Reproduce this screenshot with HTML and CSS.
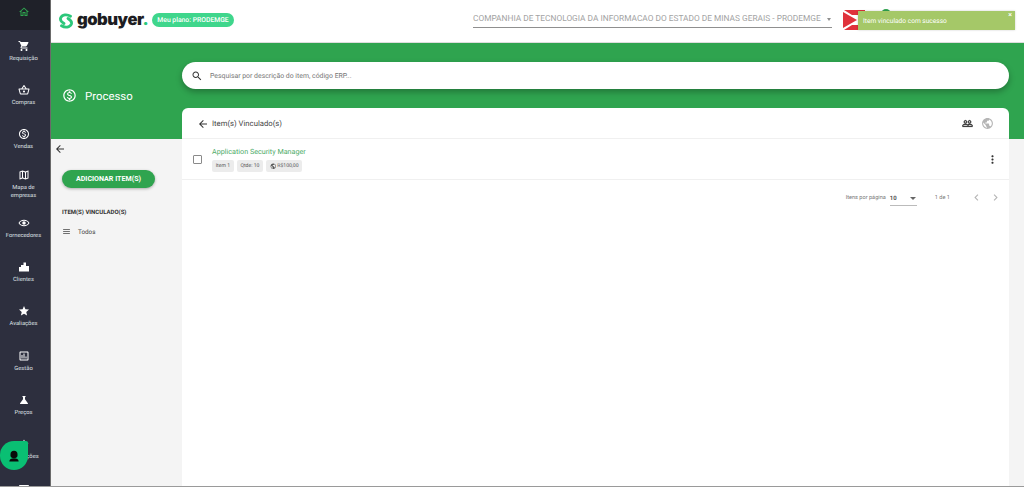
FILE: index.html
```html
<!DOCTYPE html>
<html lang="pt-BR">
<head>
<meta charset="utf-8">
<title>gobuyer</title>
<link rel="stylesheet" href="styles.css">
</head>
<body>
<div class="app">
  <aside class="sidebar">
    <a class="home"><svg class="home-icon" viewBox="0 0 24 24"><path d="M12 5.69l5 4.5V18h-2v-6H9v6H7v-7.81l5-4.5M12 3L2 12h3v8h6v-6h2v6h6v-8h3L12 3z"/></svg></a>
    <nav class="nav">
      <a class="nav-item"><svg viewBox="0 0 24 24"><path d="M7 18c-1.1 0-1.99.9-1.99 2S5.9 22 7 22s2-.9 2-2-.9-2-2-2zM1 2v2h2l3.6 7.59-1.35 2.45c-.16.28-.25.61-.25.96 0 1.1.9 2 2 2h12v-2H7.42c-.14 0-.25-.11-.25-.25l.03-.12.9-1.63h7.45c.75 0 1.41-.41 1.75-1.03l3.58-6.49c.08-.14.12-.31.12-.48 0-.55-.45-1-1-1H5.21l-.94-2H1zm16 16c-1.1 0-1.99.9-1.99 2s.89 2 1.99 2 2-.9 2-2-.9-2-2-2z"/></svg><span>Requisição</span></a>
      <a class="nav-item"><svg viewBox="0 0 24 24"><path d="M22 9h-4.79l-4.38-6.56c-.19-.28-.51-.42-.83-.42s-.64.14-.83.43L6.79 9H2c-.55 0-1 .45-1 1 0 .09.01.18.04.27l2.54 9.27c.23.84 1 1.46 1.92 1.46h13c.92 0 1.69-.62 1.93-1.46l2.54-9.27L23 10c0-.55-.45-1-1-1zM12 4.8L14.8 9H9.2L12 4.8zM18.5 19l-12.99.01L3.31 11H20.7l-2.2 8zM12 13c-1.1 0-2 .9-2 2s.9 2 2 2 2-.9 2-2-.9-2-2-2z"/></svg><span>Compras</span></a>
      <a class="nav-item"><svg viewBox="0 0 24 24"><path d="M12 2C6.48 2 2 6.48 2 12s4.48 10 10 10 10-4.48 10-10S17.52 2 12 2zm0 18c-4.41 0-8-3.59-8-8s3.59-8 8-8 8 3.59 8 8-3.59 8-8 8zm.31-8.86c-1.77-.45-2.34-.94-2.34-1.67 0-.84.79-1.43 2.1-1.43 1.38 0 1.9.66 1.94 1.64h1.71c-.05-1.34-.87-2.57-2.49-2.97V5H10.9v1.69c-1.51.32-2.72 1.3-2.72 2.81 0 1.79 1.49 2.69 3.66 3.21 1.95.46 2.34 1.15 2.34 1.87 0 .53-.39 1.39-2.1 1.39-1.6 0-2.23-.72-2.32-1.64H8.04c.1 1.7 1.36 2.66 2.86 2.97V19h2.34v-1.67c1.52-.29 2.72-1.16 2.73-2.77-.01-2.2-1.9-2.96-3.66-3.42z"/></svg><span>Vendas</span></a>
      <a class="nav-item"><svg viewBox="0 0 24 24"><path d="M20.5 3l-.16.03L15 5.1 9 3 3.36 4.9c-.21.07-.36.25-.36.48V20.5c0 .28.22.5.5.5l.16-.03L9 18.9l6 2.1 5.64-1.9c.21-.07.36-.25.36-.48V3.5c0-.28-.22-.5-.5-.5zM10 5.47l4 1.4v11.66l-4-1.4V5.47zm-5 .99l3-1.01v11.7l-3 1.16V6.46zm14 11.08l-3 1.01V6.86l3-1.16v11.84z"/></svg><span>Mapa de<br>empresas</span></a>
      <a class="nav-item"><svg viewBox="0 0 24 24"><path d="M12 5.5C7 5.500 2.730 8.100 1 12c1.730 3.900 6 6.500 11 6.500s9.270-2.600 11-6.500C21.270 8.100 17 5.500 12 5.500zm0 11c-4 0-7.300-1.800-8.800-4.500C4.700 9.300 8 7.500 12 7.500s7.300 1.800 8.800 4.500c-1.500 2.700-4.800 4.500-8.800 4.500zM12 8.500a3.500 3.500 0 1 0 0 7 3.500 3.500 0 0 0 0-7z"/></svg><span>Fornecedores</span></a>
      <a class="nav-item"><svg viewBox="0 0 24 24"><path d="M11 3h5v7h6v11H2V12h4V8h5z"/></svg><span>Clientes</span></a>
      <a class="nav-item"><svg viewBox="0 0 24 24"><path d="M12 17.27L18.18 21l-1.64-7.03L22 9.24l-7.19-.61L12 2 9.19 8.63 2 9.24l5.46 4.73L5.82 21z"/></svg><span>Avaliações</span></a>
      <a class="nav-item"><svg viewBox="0 0 24 24"><path d="M19 3H5c-1.100 0-2 .9-2 2v14c0 1.100.9 2 2 2h14c1.100 0 2-.9 2-2V5c0-1.100-.9-2-2-2zm0 16H5V5h14v14zM7 10h2v7H7zm4-3h2v10h-2zm4 6h2v4h-2z"/></svg><span>Gestão</span></a>
      <a class="nav-item"><svg viewBox="0 0 24 24"><path d="M19.800 18.400L14 10.670V6.500l1.350-1.690c.26-.33.03-.81-.39-.81H9.040c-.42 0-.65.48-.39.81L10 6.500v4.170L4.200 18.400c-.49.66-.02 1.600.8 1.600h14c.82 0 1.290-.94.8-1.600z"/></svg><span>Preços</span></a>
      <a class="nav-item"><svg viewBox="0 0 24 24"><path d="M12 3l3 6 6 1-4.500 4 1 6-5.500-3-5.500 3 1-6L3 10l6-1z"/></svg><span>Integrações</span></a>
      <a class="nav-item nav-item-cut"><svg viewBox="0 0 24 24"><path d="M4 4h16c1.100 0 2 .9 2 2v12c0 1.100-.9 2-2 2H4c-1.100 0-2-.9-2-2V6c0-1.100.9-2 2-2zm1 3v4h6V7zm8 0v4h6V7zM5 13v4h6v-4zm8 0v4h6v-4z"/></svg></a>
    </nav>
  </aside>

  <main class="main">
    <header class="topbar">
      <div class="brand">
        <svg class="brand-mark" viewBox="0 0 16 16"><path d="M12.500 3.200C9 1 4 1.500 2.600 5 1.800 7.500 3.500 9 6 10.500M3.500 12.800C7 15 12 14.500 13.400 11c.8-2.500-.9-4-3.400-5.500"/></svg>
        <span class="brand-name">gobuyer<span class="brand-dot">.</span></span>
      </div>
      <span class="plan">Meu plano: PRODEMGE</span>
      <div class="company">
        <span class="company-name">COMPANHIA DE TECNOLOGIA DA INFORMACAO DO ESTADO DE MINAS GERAIS - PRODEMGE</span>
        <i class="caret"></i>
      </div>
      <div class="company-logo"><svg viewBox="0 0 22 20"><path d="M0 2l14 8L0 18z" fill="#e0323c"/><path d="M1 0h21v5H9zM1 20h21v-5H9z" fill="#e0323c"/></svg></div>
      <span class="avatar-dot"></span>
    </header>

    <section class="banner">
      <div class="banner-title">
        <svg viewBox="0 0 24 24"><path d="M12 2C6.48 2 2 6.48 2 12s4.48 10 10 10 10-4.48 10-10S17.52 2 12 2zm0 18c-4.41 0-8-3.59-8-8s3.59-8 8-8 8 3.59 8 8-3.59 8-8 8zm.31-8.860c-1.770-.45-2.340-.94-2.340-1.670 0-.84.79-1.430 2.100-1.430 1.380 0 1.900.66 1.940 1.640h1.710c-.05-1.340-.87-2.570-2.490-2.970V5H10.900v1.690c-1.510.32-2.720 1.300-2.720 2.810 0 1.790 1.490 2.690 3.660 3.210 1.950.46 2.340 1.150 2.340 1.870 0 .53-.39 1.390-2.100 1.390-1.600 0-2.230-.72-2.320-1.640H8.040c.1 1.700 1.360 2.660 2.860 2.970V19h2.340v-1.670c1.520-.29 2.720-1.160 2.730-2.770-.01-2.200-1.900-2.960-3.660-3.420z"/></svg>
        <span>Processo</span>
      </div>
      <div class="search">
        <svg viewBox="0 0 24 24"><path d="M15.500 14h-.79l-.28-.27C15.410 12.590 16 11.110 16 9.500 16 5.910 13.090 3 9.500 3S3 5.910 3 9.500 5.910 16 9.500 16c1.610 0 3.090-.59 4.230-1.570l.27.28v.79l5 4.990L20.490 19l-4.990-5zm-6 0C7.010 14 5 11.990 5 9.500S7.010 5 9.500 5 14 7.010 14 9.500 11.990 14 9.500 14z"/></svg>
        <span>Pesquisar por descrição do item, código ERP...</span>
      </div>
    </section>

    <div class="content">
      <aside class="panel">
        <svg class="panel-back" viewBox="0 0 24 24"><path d="M20 11H7.830l5.590-5.590L12 4l-8 8 8 8 1.410-1.410L7.830 13H20v-2z"/></svg>
        <button class="add-btn">ADICIONAR ITEM(S)</button>
        <h4 class="panel-heading">ITEM(S) VINCULADO(S)</h4>
        <div class="panel-link">
          <svg viewBox="0 0 24 24"><path d="M3 18h18v-2H3v2zm0-5h18v-2H3v2zm0-7v2h18V6H3z"/></svg>
          <span>Todos</span>
        </div>
      </aside>

      <section class="card">
        <div class="card-head">
          <svg class="head-back" viewBox="0 0 24 24"><path d="M20 11H7.830l5.590-5.590L12 4l-8 8 8 8 1.410-1.410L7.830 13H20v-2z"/></svg>
          <span class="head-title">Item(s) Vinculado(s)</span>
          <svg class="head-people" viewBox="0 0 24 24"><path d="M16.500 13c-1.200 0-3.070.34-4.500 1-1.430-.67-3.300-1-4.500-1C5.330 13 1 14.080 1 16.250V19h22v-2.750c0-2.170-4.330-3.250-6.500-3.250zm-4 4.500h-10v-1.250c0-.54 2.560-1.750 5-1.750s5 1.210 5 1.750v1.250zm9 0H14v-1.250c0-.46-.2-.86-.52-1.220.88-.3 1.960-.53 3.020-.53 2.440 0 5 1.210 5 1.750v1.250zM7.500 12c1.930 0 3.500-1.570 3.500-3.500S9.430 5 7.500 5 4 6.570 4 8.500 5.570 12 7.500 12zm0-5.500c1.100 0 2 .9 2 2s-.9 2-2 2-2-.9-2-2 .9-2 2-2zm9 5.500c1.930 0 3.500-1.570 3.500-3.500S18.430 5 16.500 5 13 6.570 13 8.500s1.570 3.500 3.500 3.500zm0-5.500c1.100 0 2 .9 2 2s-.9 2-2 2-2-.9-2-2 .9-2 2-2z"/></svg>
          <svg class="head-globe" viewBox="0 0 24 24"><path d="M12 2C6.480 2 2 6.480 2 12s4.480 10 10 10 10-4.480 10-10S17.520 2 12 2zm-1 17.930c-3.950-.49-7-3.850-7-7.930 0-.62.08-1.210.21-1.790L9 15v1c0 1.100.9 2 2 2v1.930zm6.900-2.540c-.26-.81-1-1.390-1.900-1.390h-1v-3c0-.55-.45-1-1-1H8v-2h2c.55 0 1-.45 1-1V7h2c1.100 0 2-.9 2-2v-.41c2.930 1.190 5 4.060 5 7.410 0 2.080-.8 3.970-2.100 5.390z"/></svg>
        </div>
        <div class="row">
          <span class="checkbox"></span>
          <div class="row-body">
            <a class="row-title">Application Security Manager</a>
            <div class="chips">
              <span class="chip">Item 1</span>
              <span class="chip">Qtde: 10</span>
              <span class="chip"><svg viewBox="0 0 24 24"><path d="M12 2C6.480 2 2 6.480 2 12s4.480 10 10 10 10-4.480 10-10S17.520 2 12 2zm-1 17.930c-3.950-.49-7-3.850-7-7.930 0-.62.08-1.210.21-1.790L9 15v1c0 1.100.9 2 2 2v1.930zm6.900-2.540c-.26-.81-1-1.390-1.900-1.390h-1v-3c0-.55-.45-1-1-1H8v-2h2c.55 0 1-.45 1-1V7h2c1.100 0 2-.9 2-2v-.41c2.930 1.190 5 4.060 5 7.410 0 2.080-.8 3.970-2.100 5.390z"/></svg>R$100,00</span>
            </div>
          </div>
          <svg class="row-more" viewBox="0 0 24 24"><path d="M12 8c1.100 0 2-.9 2-2s-.9-2-2-2-2 .9-2 2 .9 2 2 2zm0 2c-1.100 0-2 .9-2 2s.9 2 2 2 2-.9 2-2-.9-2-2-2zm0 6c-1.100 0-2 .9-2 2s.9 2 2 2 2-.9 2-2-.9-2-2-2z"/></svg>
        </div>
        <div class="pager">
          <span class="pager-label">Itens por página</span>
          <div class="pager-select"><b>10</b><i class="caret dark"></i></div>
          <span class="pager-range">1 de 1</span>
          <svg class="pager-nav" viewBox="0 0 24 24"><path d="M15.410 7.410L14 6l-6 6 6 6 1.410-1.410L10.830 12z"/></svg>
          <svg class="pager-nav" viewBox="0 0 24 24"><path d="M10 6L8.590 7.410 13.170 12l-4.580 4.590L10 18l6-6z"/></svg>
        </div>
      </section>
    </div>
  </main>
</div>

<div class="toast"><span>Item vinculado com sucesso</span><b class="toast-close">×</b></div>
<div class="chat"><svg viewBox="0 0 24 24"><path d="M12 3a6 6 0 0 0-6 6v2.500C6 14 8.500 15.500 12 15.500s6-1.500 6-4V9a6 6 0 0 0-6-6zM4 21.500c0-3.500 3.500-5.500 8-5.500s8 2 8 5.500z"/></svg></div>
</body>
</html>
```
FILE: styles.css
```css
* { box-sizing: border-box; }
html, body { margin: 0; height: 487px; overflow: hidden; }
body { font-family: Roboto, "Liberation Sans", sans-serif; color: #333; background: #f4f4f4; text-rendering: geometricPrecision; }
svg { display: block; fill: currentColor; flex: none; }

.app { display: flex; height: 487px; border-bottom: 1px solid #9a9a9a; }

.sidebar { width: 51px; flex: none; background: #2d2f3e; color: #fff; overflow: hidden; border-right: 1px solid #6a6a6a; padding-right: 3px; }
.home { display: flex; justify-content: center; align-items: center; height: 30px; margin-right: -3px; padding-right: 3px; background: #1f2129; }
.home-icon { width: 12px; height: 12px; margin-top: -6px; color: #2fa44f; }
.nav { display: flex; flex-direction: column; margin-top: -1px; }
.nav-item { height: 44.3px; flex: none; display: flex; flex-direction: column; align-items: center; justify-content: center; gap: 3px; text-align: center; }
.nav-item-cut { justify-content: flex-start; padding-top: 11px; }
.nav-item svg { width: 12px; height: 12px; }
.nav-item span { font-size: 5.8px; line-height: 8px; color: #dfe0e4; white-space: nowrap; }

.main { flex: 1; min-width: 0; display: flex; flex-direction: column; }
.topbar { height: 43px; flex: none; background: #fff; display: flex; align-items: center; padding-left: 7px; border-bottom: 1px solid #ddd; }
.brand { display: flex; align-items: center; gap: 3px; width: 94px; flex: none; }
.brand-mark { width: 16px; height: 16px; fill: none; stroke: #2bc77a; stroke-width: 2.8; stroke-linecap: round; }
.brand-name { font-family: Inter, sans-serif; font-weight: 900; font-size: 16.6px; letter-spacing: -.5px; line-height: 20px; color: #1d1d22; margin-top: -3px; }
.brand-dot { color: #2bc77a; }
.plan { width: 82px; height: 14px; flex: none; border-radius: 7px; background: #3fd68c; color: #fff; font-size: 6.8px; font-weight: 500; line-height: 14px; text-align: center; margin-top: -3px; }
.company { width: 359px; flex: none; margin-left: 239px; height: 17px; margin-top: -3px; display: flex; align-items: center; justify-content: space-between; border-bottom: 1px solid #8f8f8f; }
.company-name { font-size: 8.33px; color: #a3a3a3; white-space: nowrap; }
.caret { width: 0; height: 0; border: 2.5px solid transparent; border-top: 3px solid #8f8f8f; border-bottom: 0; margin-right: 1px; }
.caret.dark { border-left-width: 3px; border-right-width: 3px; border-top-color: #666; }
.company-logo { width: 22px; height: 20px; margin-left: 11px; margin-top: -2px; flex: none; }
.company-logo svg { width: 22px; height: 20px; }
.avatar-dot { width: 10px; height: 10px; margin-left: 16px; margin-top: -15px; border-radius: 50%; background: #2fa44f; flex: none; }

.banner { height: 96px; flex: none; background: #2fa44f; display: flex; padding: 19px 15px 0 0; color: #fff; }
.banner-title { width: 131px; flex: none; height: 27px; margin-top: 20px; padding-left: 11px; display: flex; align-items: center; gap: 8px; font-size: 11.4px; }
.banner-title svg { width: 15px; height: 15px; }
.search { flex: 1; height: 27px; border-radius: 14px; background: #fff; display: flex; align-items: center; gap: 7px; padding-left: 9px; color: #333; box-shadow: 0 3px 6px rgba(0,0,0,.28); }
.search svg { width: 12px; height: 12px; }
.search span { font-size: 6.9px; color: #777; }

.content { flex: 1; min-height: 0; display: flex; }
.panel { width: 131px; flex: none; padding: 4px 0 0 11px; display: flex; flex-direction: column; }
.panel-back { width: 12px; height: 12px; margin-left: -8px; }
.add-btn { width: 93px; height: 18px; margin-top: 15px; padding: 0; border: 0; border-radius: 9px; background: #2fa44f; color: #fff; font: 700 7.1px/18px Roboto, sans-serif; box-shadow: 0 1px 3px rgba(0,0,0,.3); }
.panel-heading { margin: 21px 0 0; font-size: 6px; line-height: 8px; font-weight: 700; color: #333; }
.panel-link { display: flex; align-items: center; gap: 7px; margin-top: 10px; padding-left: 0; font-size: 6.3px; color: #444; line-height: 8px; }
.panel-link svg { width: 9px; height: 9px; }

.card { flex: 1; margin: -31px 15px 0 0; background: #fff; border-radius: 6px 6px 0 0; display: flex; flex-direction: column; min-width: 0; }
.card-head { height: 31px; flex: none; display: flex; align-items: center; padding: 0 15px 0 15px; border-bottom: 1px solid #f0f0f0; }
.head-back { width: 12px; height: 12px; margin-top: 1px; }
.head-title { flex: 1; margin: 1px 0 0 3px; font-size: 7.7px; color: #444; }
.head-people { width: 11px; height: 11px; stroke: currentColor; stroke-width: .8; color: #222; }
.head-globe { width: 13px; height: 13px; color: #b5b5b5; margin-left: 8px; }
.row { height: 41px; flex: none; display: flex; align-items: center; padding: 0 11px; border-bottom: 1px solid #f0f0f0; }
.checkbox { width: 9px; height: 9px; flex: none; border: 1px solid #8a8a8a; border-radius: 1px; margin: 1px 10px 0 0; }
.row-body { flex: 1; }
.row-title { display: block; font-size: 7.2px; line-height: 10px; color: #4cab68; margin-top: 1px; }
.chips { display: flex; gap: 3px; margin-top: 3px; }
.chip { display: flex; align-items: center; gap: 1px; height: 12px; padding: 0 3.7px; background: #ececec; border-radius: 2px; font-size: 5.1px; color: #555; }
.chip svg { width: 6.5px; height: 6.5px; }
.row-more { width: 13px; height: 13px; margin-right: -1px; }
.pager { display: flex; align-items: center; justify-content: flex-end; height: 35px; padding-right: 7.5px; font-size: 5.6px; color: #777; }
.pager-select { display: flex; align-items: center; justify-content: space-between; width: 27px; height: 14px; margin: 2px 0 0 4px; border-bottom: 1px solid #bbb; color: #555; }
.pager-select b { font-size: 6px; }
.pager-range { margin: 0 13.5px 0 18px; }
.pager-nav { width: 13px; height: 13px; color: #b5b5b5; margin-left: 6px; }

.toast { position: absolute; left: 858px; top: 11px; width: 157px; height: 19px; background: #a5c868; color: #fff; font-size: 6.6px; display: flex; align-items: center; padding-left: 5px; box-shadow: 0 0 2px rgba(0,0,0,.2); }
.toast-close { position: absolute; right: 3px; top: 1px; font-size: 7px; line-height: 7px; }
.chat { position: absolute; left: 0; top: 441px; width: 28px; height: 29px; background: #0abf73; border-radius: 14px 2px 14px 14px; display: flex; align-items: center; justify-content: center; }
.chat svg { width: 14px; height: 14px; color: #0a0a0a; }
```
